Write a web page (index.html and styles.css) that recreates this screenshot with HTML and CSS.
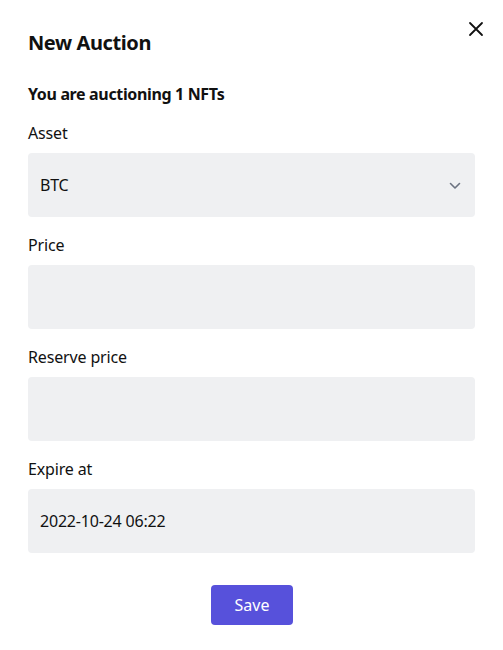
FILE: index.html
```html
<!DOCTYPE html>
<html>
<head>
<meta charset="utf-8">
<link rel="stylesheet" href="styles.css">
</head>
<body>
<div class="modal">
  <button class="close" aria-label="Close">
    <svg width="16" height="16" viewBox="0 0 16 16"><path d="M2 2 L14 14 M14 2 L2 14" stroke="#111" stroke-width="1.8" fill="none" stroke-linecap="round"/></svg>
  </button>
  <h1 class="title">New Auction</h1>
  <p class="subtitle">You are auctioning 1 NFTs</p>
  <div class="fields">
    <div class="field">
      <label class="label">Asset</label>
      <div class="box select">
        <span>BTC</span>
        <svg class="chev" width="12" height="8" viewBox="0 0 12 8"><path d="M1.5 1.5 L6 6 L10.5 1.5" stroke="#6b7280" stroke-width="1.6" fill="none" stroke-linecap="round" stroke-linejoin="round"/></svg>
      </div>
    </div>
    <div class="field">
      <label class="label">Price</label>
      <div class="box"></div>
    </div>
    <div class="field">
      <label class="label">Reserve price</label>
      <div class="box"></div>
    </div>
    <div class="field">
      <label class="label">Expire at</label>
      <div class="box"><span>2022-10-24 06:22</span></div>
    </div>
  </div>
  <div class="actions">
    <button class="save">Save</button>
  </div>
</div>
</body>
</html>
```
FILE: styles.css
```css
* { box-sizing: border-box; }
html, body { margin: 0; background: #fff; }
body { font-family: "Noto Sans", "DejaVu Sans", sans-serif; color: #111; }
.modal { position: relative; width: 503px; padding: 29px 28px 0 28px; }
.close { position: absolute; top: 21px; left: 468px; width: 16px; height: 16px; padding: 0; border: 0; background: none; display: flex; }
.title { margin: 0; font-size: 20px; line-height: 28px; font-weight: 700; letter-spacing: -0.4px; }
.subtitle { margin: 25px 0 0 0; font-size: 16px; line-height: 24px; font-weight: 700; letter-spacing: -0.35px; }
.fields { margin-top: 15px; display: flex; flex-direction: column; gap: 16px; }
.field { display: flex; flex-direction: column; gap: 8px; }
.label { font-size: 16px; line-height: 24px; letter-spacing: -0.15px; }
.box { height: 64px; background: #eff0f2; border-radius: 4px; padding: 0 14px 0 12px; display: flex; align-items: center; justify-content: space-between; font-size: 16px; letter-spacing: -0.2px; }
.chev { margin-top: 1px; }
.actions { margin-top: 32px; display: flex; justify-content: center; }
.save { width: 82px; height: 40px; border: 0; border-radius: 4px; background: #5751db; color: #fff; font-family: inherit; font-size: 16px; margin-left: 1px; }
```
